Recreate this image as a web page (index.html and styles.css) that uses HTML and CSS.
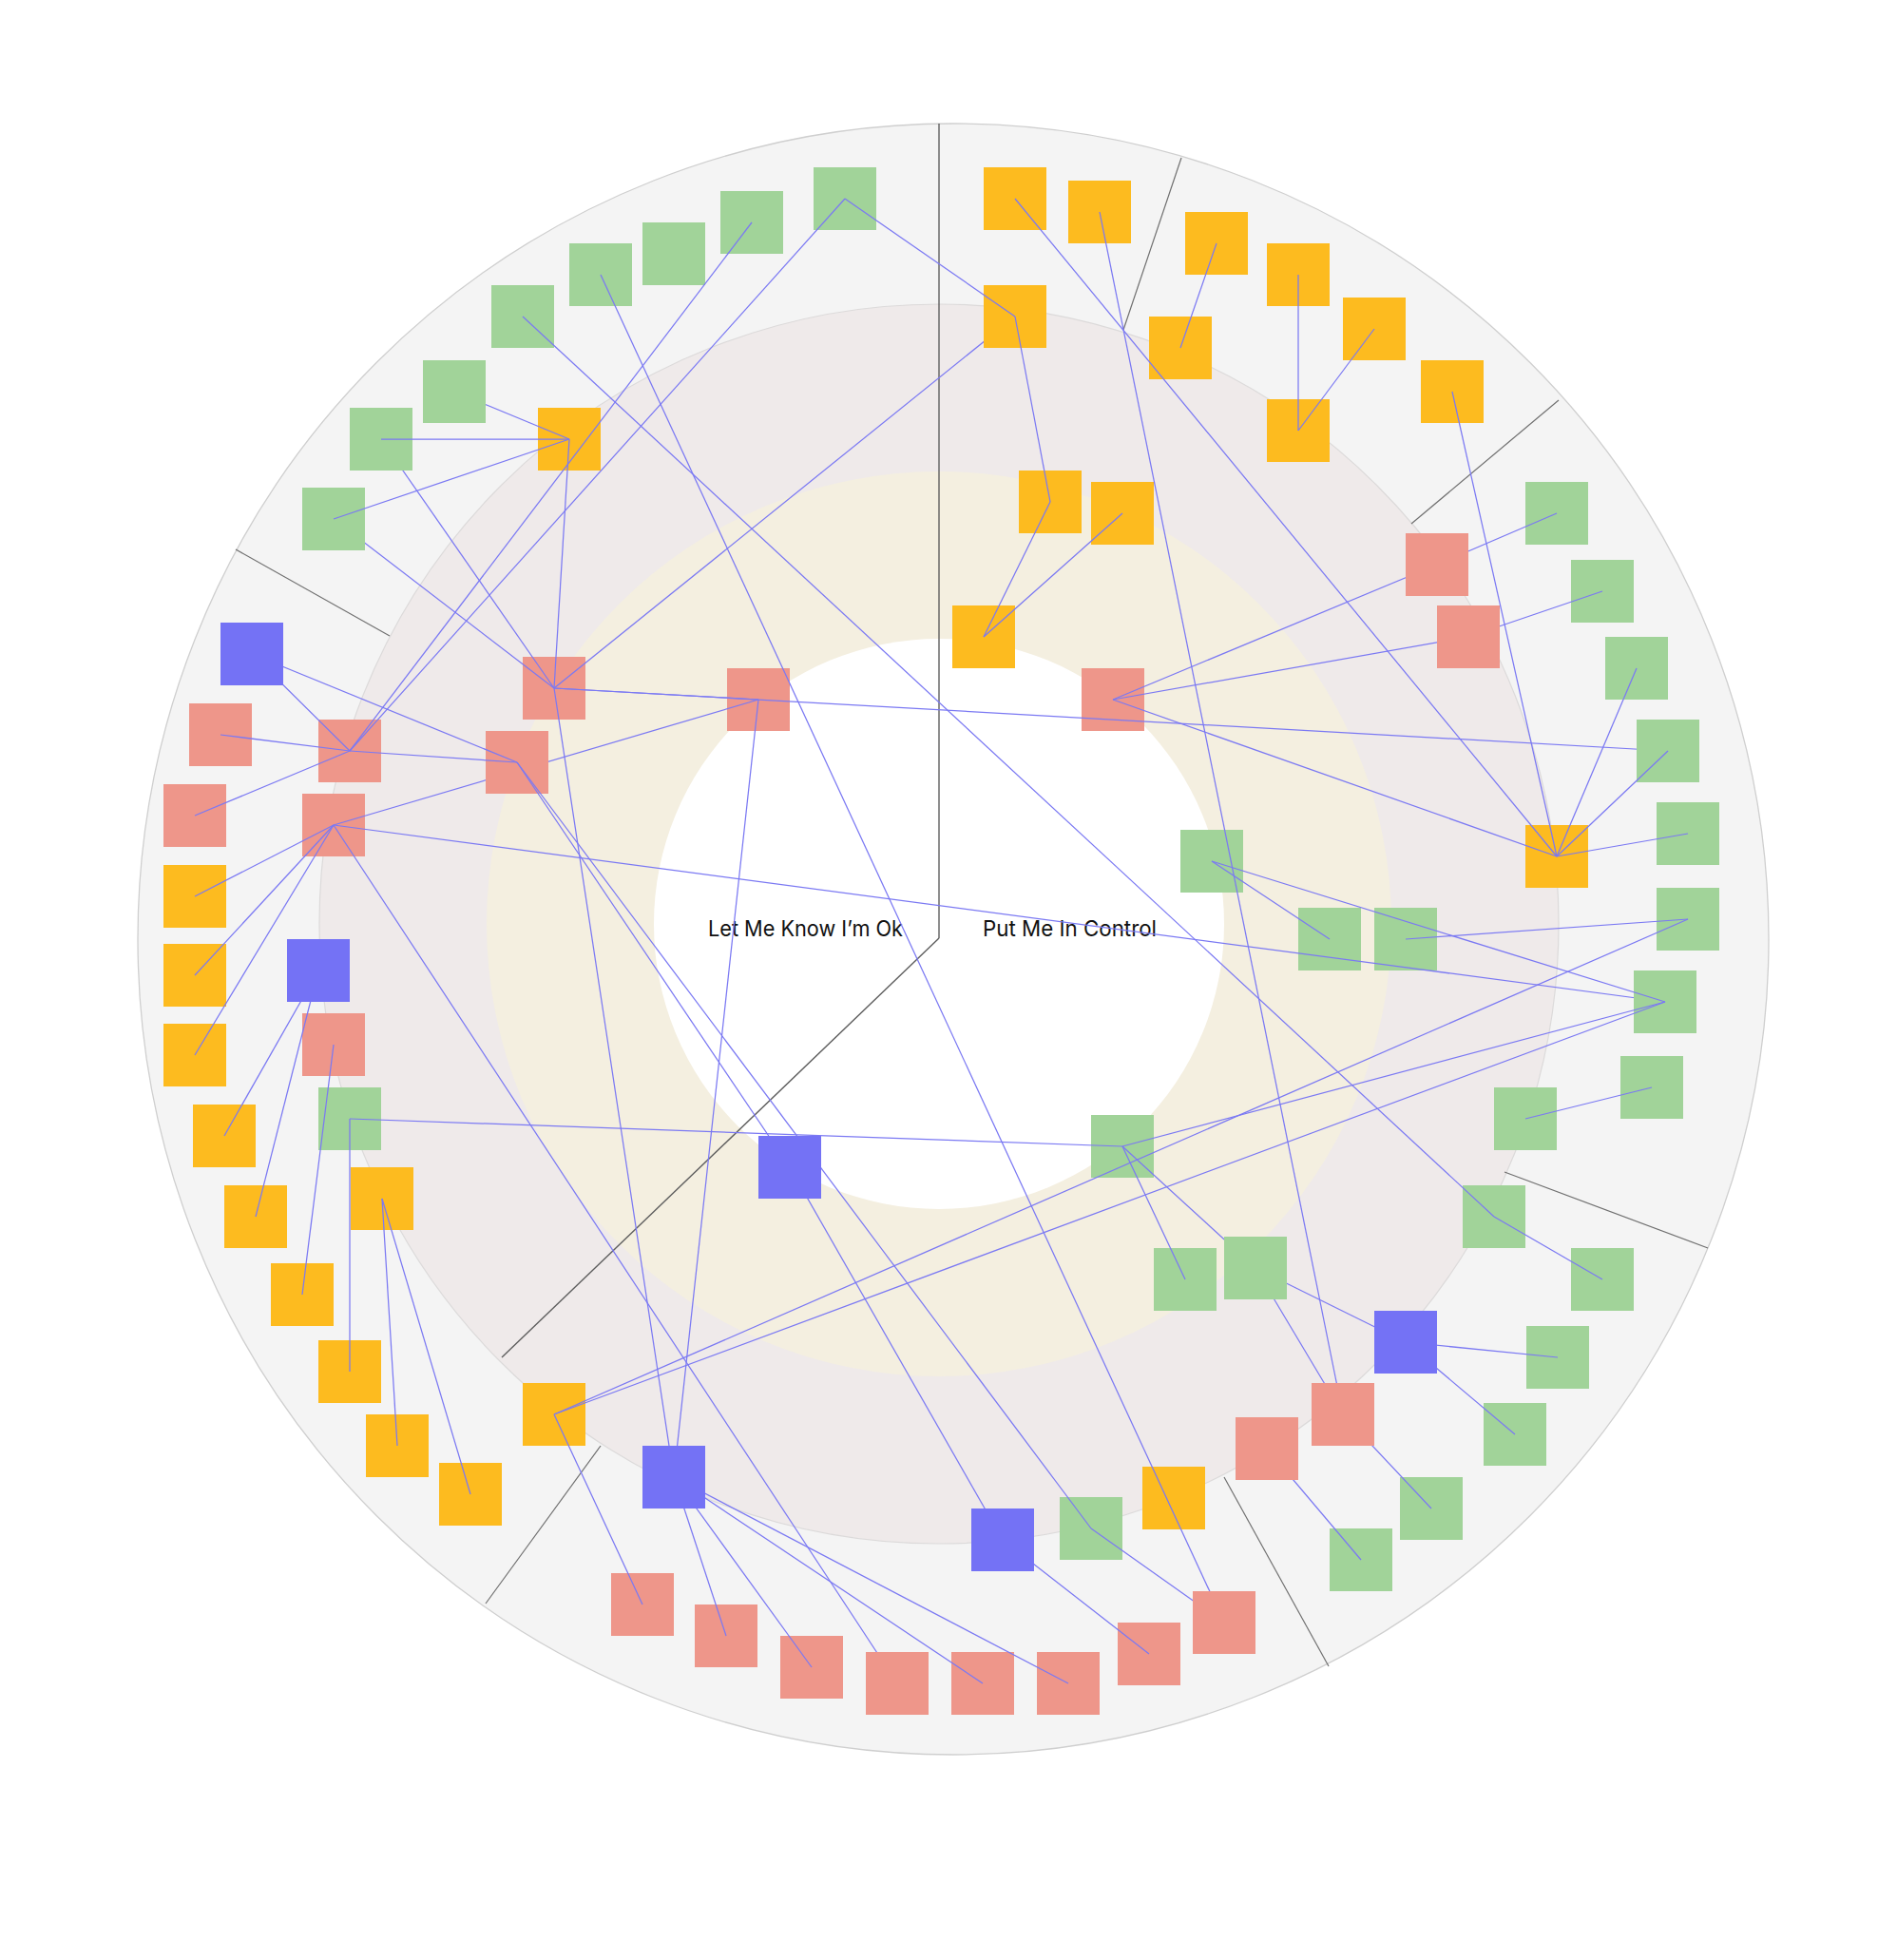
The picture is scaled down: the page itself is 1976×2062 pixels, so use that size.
FILE: index.html
```html
<!DOCTYPE html>
<html lang="en">
<head>
<meta charset="utf-8">
<title>Needs map</title>
<link rel="stylesheet" href="styles.css">
</head>
<body>
<main class="page">
  <svg id="chart" class="chart" width="1976" height="2062" viewBox="0 0 1976 2062" xmlns="http://www.w3.org/2000/svg">
    <defs id="masks"></defs>
    <g class="rings">
      <circle class="ring-outer" cx="1003" cy="988" r="858"></circle>
      <circle class="ring-mid" cx="988" cy="972" r="652"></circle>
      <circle class="ring-inner" cx="988" cy="972" r="476"></circle>
      <circle class="ring-core" cx="988" cy="972" r="300"></circle>
    </g>
    <g class="sectors">
      <line class="divider divider-main" x1="988" y1="130" x2="988" y2="987"></line>
      <line class="divider divider-main" x1="988" y1="987" x2="528" y2="1428"></line>
      <line class="divider" x1="1243" y1="166" x2="1182" y2="347"></line>
      <line class="divider" x1="1640" y1="421" x2="1485" y2="551"></line>
      <line class="divider" x1="1797" y1="1313" x2="1583" y2="1233"></line>
      <line class="divider" x1="1398" y1="1753" x2="1288" y2="1554"></line>
      <line class="divider" x1="511" y1="1687" x2="632" y2="1521"></line>
      <line class="divider" x1="248" y1="578" x2="410" y2="669"></line>
    </g>
    <g class="labels">
      <text class="label" x="745" y="985" textLength="205" lengthAdjust="spacingAndGlyphs">Let Me Know I’m Ok</text>
      <text class="label" x="1034" y="985" textLength="183" lengthAdjust="spacingAndGlyphs">Put Me In Control</text>
    </g>
    <g id="nodes" class="nodes"></g>
    <g id="links" class="links"></g>
  </svg>
</main>
<script src="script.js"></script>
</body>
</html>
```
FILE: styles.css
```css
html, body {
  margin: 0;
  padding: 0;
  background: #ffffff;
}
.page {
  display: block;
  width: 1976px;
  height: 2062px;
}
.chart {
  display: block;
}
.ring-outer {
  fill: #f4f4f4;
  stroke: #cfcfcf;
  stroke-width: 1.3;
}
.ring-mid {
  fill: #efeaea;
  stroke: #dcdada;
  stroke-width: 1.2;
}
.ring-inner {
  fill: #f4efe0;
}
.ring-core {
  fill: #ffffff;
}
.divider {
  stroke: #707070;
  stroke-width: 1.2;
}
.divider-main {
  stroke: #5e5e5e;
  stroke-width: 1.4;
}
.label {
  font-family: "Inter", "Open Sans", "DejaVu Sans", sans-serif;
  font-size: 23px;
  fill: #111111;
}
.node-g { fill: #a1d399; }
.node-o { fill: #fdbb1f; }
.node-r { fill: #ee968a; }
.node-b { fill: #7472f5; }
.link {
  stroke: #7b79f3;
  stroke-width: 1.25;
  fill: none;
}
.mask-show { fill: #ffffff; }
.mask-hide { fill: #000000; }
```
FILE: script.js
```js
(function () {
  var NS = 'http://www.w3.org/2000/svg';
  var SIZE = 66;
  var W = 1976, H = 2062;

  var nodes = {
    g1: [856, 176], g2: [758, 201], g3: [676, 234], g4: [599, 256],
    g5: [517, 300], g6: [445, 379], g7: [368, 429], g8: [318, 513],
    o1: [566, 429],
    b1: [232, 655], r1: [199, 740], r2: [335, 757], r3: [172, 825], r4: [318, 835],
    o2: [172, 910], o3: [172, 993], o4: [172, 1077], b2: [302, 988], r5: [318, 1066],
    g9: [335, 1144], o5: [203, 1162], o6: [236, 1247], o7: [369, 1228], o8: [285, 1329],
    o9: [335, 1410], o10: [385, 1488], o11: [462, 1539], o12: [550, 1455],
    r6: [550, 691], r7: [511, 769], r8: [765, 703], b3: [798, 1195],
    b4: [676, 1521], r9: [643, 1655], r10: [731, 1688], r11: [821, 1721],
    r12: [911, 1738], r13: [1001, 1738], r14: [1091, 1738], r15: [1176, 1707],
    r16: [1255, 1674], b5: [1022, 1587], g10: [1115, 1575], o13: [1202, 1543],
    r17: [1300, 1491], r18: [1380, 1455], b6: [1446, 1379], g11: [1214, 1313],
    g12: [1288, 1301], g13: [1148, 1173], g14: [1399, 1608], g15: [1473, 1554],
    g16: [1561, 1476], g17: [1606, 1395], g18: [1653, 1313], g19: [1539, 1247],
    g20: [1572, 1144], g21: [1705, 1111],
    g22: [1605, 507], g23: [1653, 589], g24: [1689, 670], g25: [1722, 757],
    g26: [1743, 844], g27: [1743, 934], g28: [1719, 1021], o14: [1605, 868],
    g29: [1242, 873], g30: [1366, 955], g31: [1446, 955],
    r19: [1138, 703], r20: [1479, 561], r21: [1512, 637],
    o15: [1035, 176], o16: [1124, 190], o17: [1247, 223], o18: [1333, 256],
    o19: [1413, 313], o20: [1495, 379], o21: [1035, 300], o22: [1209, 333],
    o23: [1333, 420], o24: [1072, 495], o25: [1148, 507], o26: [1002, 637]
  };

  var links = [
    ['g1', 'r2'], ['g2', 'r2'], ['g1', 'o21'], ['g4', 'r16', ['r16']],
    ['g5', 'g19'], ['g6', 'o1', ['g6']], ['g7', 'o1'], ['g8', 'o1'],
    ['g7', 'r6', ['g7']], ['g8', 'r6', ['g8']], ['o1', 'r6'],
    ['r6', 'o21', ['o21']], ['r6', 'r8'], ['r6', 'g25', ['g25']], ['r6', 'b4', ['b4']],
    ['r7', 'b3', ['b3']], ['r7', 'g10', ['b3']],
    ['r2', 'b1', ['b1']], ['r2', 'r1'], ['r2', 'r3'], ['r2', 'r7'], ['b1', 'r7', ['b1']],
    ['r4', 'r8', ['r7']], ['r4', 'o2'], ['r4', 'o3'], ['r4', 'o4'],
    ['r4', 'r12', ['r12']], ['r4', 'g28', ['g28']], ['r8', 'b4', ['b4']],
    ['b2', 'o5', ['b2']], ['b2', 'o6', ['b2']], ['r5', 'o8'],
    ['g9', 'o9'], ['g9', 'g13'], ['o7', 'o10'], ['o7', 'o11'],
    ['o12', 'g27'], ['o12', 'g28'], ['o12', 'r9'],
    ['b4', 'r10', ['b4']], ['b4', 'r11', ['b4']], ['b4', 'r13', ['b4']], ['b4', 'r14', ['b4']],
    ['b3', 'b5', ['b3', 'b5']],
    ['o15', 'o14'], ['o16', 'r18', ['r18']], ['o17', 'o22'], ['o18', 'o23'],
    ['o19', 'o23'], ['o20', 'o14'], ['o21', 'o24'], ['o24', 'o26'], ['o25', 'o26'],
    ['r19', 'r20', ['r20']], ['r19', 'r21', ['r21']], ['r19', 'o14'],
    ['r20', 'g22', ['r20']], ['r21', 'g23', ['r21']],
    ['o14', 'g24'], ['o14', 'g25'], ['o14', 'g26'],
    ['g29', 'g30'], ['g29', 'g28'], ['g31', 'g27'],
    ['g13', 'g11'], ['g13', 'g12', ['g12']], ['g12', 'b6', ['g12', 'b6']],
    ['g12', 'r18', ['g12', 'r18']], ['g13', 'g28'],
    ['r18', 'g15', ['r18']], ['r17', 'g14', ['r17']],
    ['b6', 'g17', ['b6']], ['b6', 'g16', ['b6']],
    ['g19', 'g18'], ['g20', 'g21'], ['b5', 'r15', ['b5']], ['g10', 'r16', ['r16']]
  ];

  function make(tag, attrs, parent) {
    var e = document.createElementNS(NS, tag);
    for (var k in attrs) { e.setAttribute(k, attrs[k]); }
    if (parent) { parent.appendChild(e); }
    return e;
  }

  var nodeLayer = document.getElementById('nodes');
  var linkLayer = document.getElementById('links');
  var defs = document.getElementById('masks');

  Object.keys(nodes).forEach(function (id) {
    var p = nodes[id];
    make('rect', {
      x: p[0], y: p[1], width: SIZE, height: SIZE,
      'class': 'node node-' + id.charAt(0)
    }, nodeLayer);
  });

  links.forEach(function (l, i) {
    var a = nodes[l[0]], b = nodes[l[1]];
    var attrs = {
      x1: a[0] + SIZE / 2, y1: a[1] + SIZE / 2,
      x2: b[0] + SIZE / 2, y2: b[1] + SIZE / 2,
      'class': 'link'
    };
    if (l[2] && l[2].length) {
      var mid = 'hide-' + i;
      var m = make('mask', {
        id: mid, maskUnits: 'userSpaceOnUse', x: 0, y: 0, width: W, height: H
      }, defs);
      make('rect', { x: 0, y: 0, width: W, height: H, 'class': 'mask-show' }, m);
      l[2].forEach(function (oid) {
        var o = nodes[oid];
        make('rect', { x: o[0], y: o[1], width: SIZE, height: SIZE, 'class': 'mask-hide' }, m);
      });
      attrs.mask = 'url(#' + mid + ')';
    }
    make('line', attrs, linkLayer);
  });
})();
```
